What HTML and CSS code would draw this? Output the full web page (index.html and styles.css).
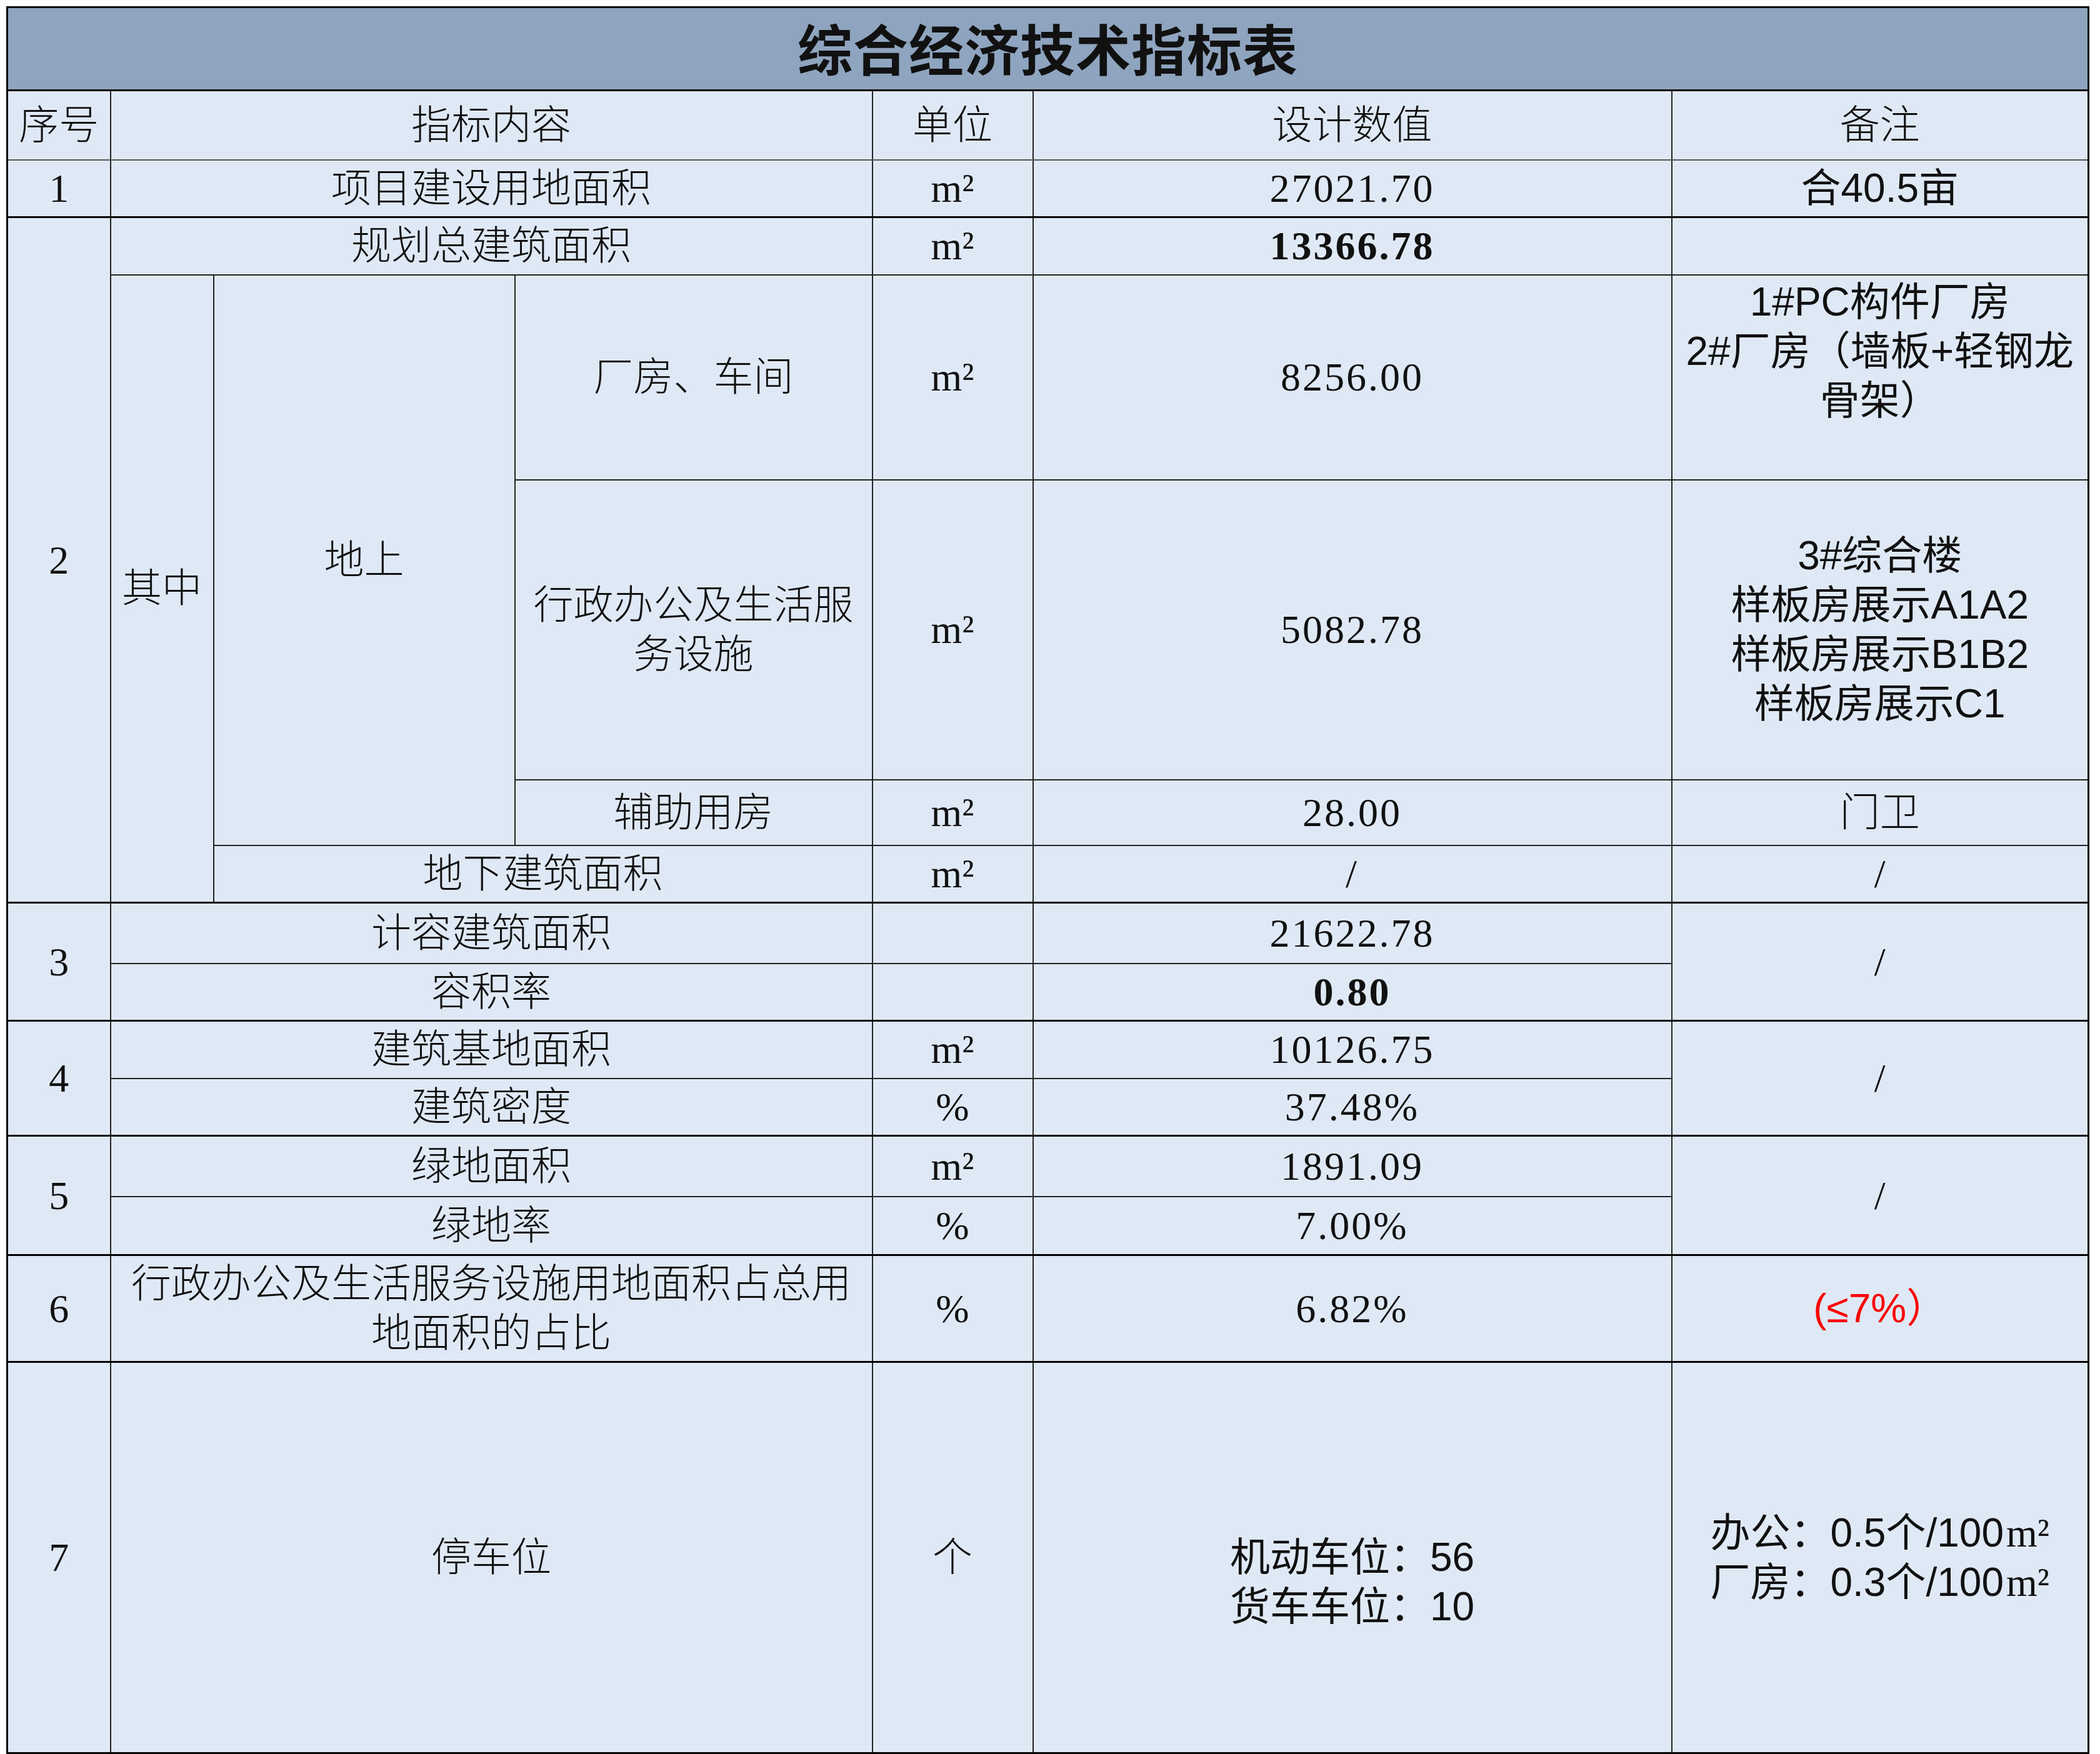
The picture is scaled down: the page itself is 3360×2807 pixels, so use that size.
FILE: index.html
```html
<!DOCTYPE html>
<html lang="zh-CN">
<head>
<meta charset="utf-8">
<title>综合经济技术指标表</title>
<link rel="stylesheet" href="styles.css">
</head>
<body>
<table class="sheet">
  <colgroup>
    <col class="c-no">
    <col class="c-sub1">
    <col class="c-sub2">
    <col class="c-name">
    <col class="c-unit">
    <col class="c-val">
    <col class="c-note">
  </colgroup>
  <tbody>
    <tr class="r-title"><td colspan="7" class="title">综合经济技术指标表</td></tr>
    <tr class="r-head">
      <td>序号</td>
      <td colspan="3">指标内容</td>
      <td>单位</td>
      <td>设计数值</td>
      <td>备注</td>
    </tr>
    <tr class="r-92 g-end">
      <td>1</td>
      <td colspan="3">项目建设用地面积</td>
      <td class="unit">m²</td>
      <td class="num">27021.70</td>
      <td class="note">合40.5亩</td>
    </tr>
    <tr class="r-92">
      <td rowspan="5" class="g-end-cell">2</td>
      <td colspan="3">规划总建筑面积</td>
      <td class="unit">m²</td>
      <td class="num bold">13366.78</td>
      <td class="note"></td>
    </tr>
    <tr class="r-328">
      <td rowspan="4" class="g-end-cell">其中</td>
      <td rowspan="3">地上</td>
      <td>厂房、车间</td>
      <td class="unit">m²</td>
      <td class="num">8256.00</td>
      <td class="note top">1#PC构件厂房<br>2#厂房（墙板+轻钢龙骨架）</td>
    </tr>
    <tr class="r-480">
      <td>行政办公及生活服务设施</td>
      <td class="unit">m²</td>
      <td class="num">5082.78</td>
      <td class="note">3#综合楼<br>样板房展示A1A2<br>样板房展示B1B2<br>样板房展示C1</td>
    </tr>
    <tr class="r-105">
      <td>辅助用房</td>
      <td class="unit">m²</td>
      <td class="num">28.00</td>
      <td>门卫</td>
    </tr>
    <tr class="r-92 g-end">
      <td colspan="2">地下建筑面积</td>
      <td class="unit">m²</td>
      <td class="num">/</td>
      <td>/</td>
    </tr>
    <tr class="r-97">
      <td rowspan="2" class="g-end-cell">3</td>
      <td colspan="3">计容建筑面积</td>
      <td class="unit"></td>
      <td class="num">21622.78</td>
      <td rowspan="2" class="g-end-cell">/</td>
    </tr>
    <tr class="r-92 g-end">
      <td colspan="3">容积率</td>
      <td class="unit"></td>
      <td class="num bold">0.80</td>
    </tr>
    <tr class="r-92">
      <td rowspan="2" class="g-end-cell">4</td>
      <td colspan="3">建筑基地面积</td>
      <td class="unit">m²</td>
      <td class="num">10126.75</td>
      <td rowspan="2" class="g-end-cell">/</td>
    </tr>
    <tr class="r-92 g-end">
      <td colspan="3">建筑密度</td>
      <td class="unit">%</td>
      <td class="num">37.48%</td>
    </tr>
    <tr class="r-97">
      <td rowspan="2" class="g-end-cell">5</td>
      <td colspan="3">绿地面积</td>
      <td class="unit">m²</td>
      <td class="num">1891.09</td>
      <td rowspan="2" class="g-end-cell">/</td>
    </tr>
    <tr class="r-94 g-end">
      <td colspan="3">绿地率</td>
      <td class="unit">%</td>
      <td class="num">7.00%</td>
    </tr>
    <tr class="r-171 g-end">
      <td>6</td>
      <td colspan="3">行政办公及生活服务设施用地面积占总用地面积的占比</td>
      <td class="unit">%</td>
      <td class="num">6.82%</td>
      <td class="note red">(≤7%）</td>
    </tr>
    <tr class="r-626">
      <td>7</td>
      <td colspan="3">停车位</td>
      <td>个</td>
      <td class="note shift">机动车位：56<br>货车车位：10</td>
      <td class="note">办公：0.5个/100<span class="sq">m²</span><br>厂房：0.3个/100<span class="sq">m²</span></td>
    </tr>
  </tbody>
</table>
</body>
</html>
```

FILE: styles.css
```css
html, body {
  margin: 0;
  padding: 0;
  background: #ffffff;
}

body {
  padding: 10px 0 0 10px;
}

.sheet {
  width: 3332px;
  table-layout: fixed;
  border-collapse: collapse;
  border: 3px solid #000;
  background: #dfe9f5;
  font-family: "Liberation Serif", "Noto Sans CJK SC", serif;
  font-size: 64px;
  line-height: 79px;
  color: #111;
}

.c-no { width: 165px; }
.c-sub1 { width: 165px; }
.c-sub2 { width: 482px; }
.c-name { width: 572px; }
.c-unit { width: 257px; }
.c-val { width: 1022px; }
.c-note { width: 667px; }

.sheet td {
  border: 2px solid #222;
  padding: 0 4px;
  text-align: center;
  vertical-align: middle;
  font-weight: 300;
  overflow: hidden;
}

.sheet tr.g-end td,
.sheet td.g-end-cell {
  border-bottom: 3px solid #000;
}

.r-title { height: 133px; }
.r-head { height: 111px; }
.r-92 { height: 92px; }
.r-94 { height: 94px; }
.r-97 { height: 97px; }
.r-105 { height: 105px; }
.r-171 { height: 171px; }
.r-328 { height: 328px; }
.r-480 { height: 480px; }
.r-626 { height: 626px; }

.sheet td.title {
  background: #8fa5bf;
  font-family: "Noto Sans CJK SC", sans-serif;
  font-size: 88px;
  font-weight: 700;
  letter-spacing: 1px;
  color: #111;
  border-bottom: 3px solid #000;
  padding-bottom: 8px;
}

.r-head td {
  border-bottom: 2px solid #555;
}

.sheet td.num {
  font-family: "Liberation Serif", "Noto Sans CJK SC", serif;
  letter-spacing: 3px;
  font-weight: 400;
}

.sheet td.num.bold {
  font-weight: 700;
}

.sheet td.unit {
  font-family: "Liberation Serif", serif;
  font-weight: 400;
}

.sheet td.note {
  font-family: "Liberation Sans", "Noto Sans CJK SC", sans-serif;
  font-weight: 400;
}

.sheet td.top {
  vertical-align: top;
  padding-top: 3px;
}

.sheet td.shift {
  padding-top: 79px;
}

.sheet td.red {
  color: #ff0000;
}

.sq {
  font-family: "Liberation Serif", serif;
  margin-left: 4px;
}
```
